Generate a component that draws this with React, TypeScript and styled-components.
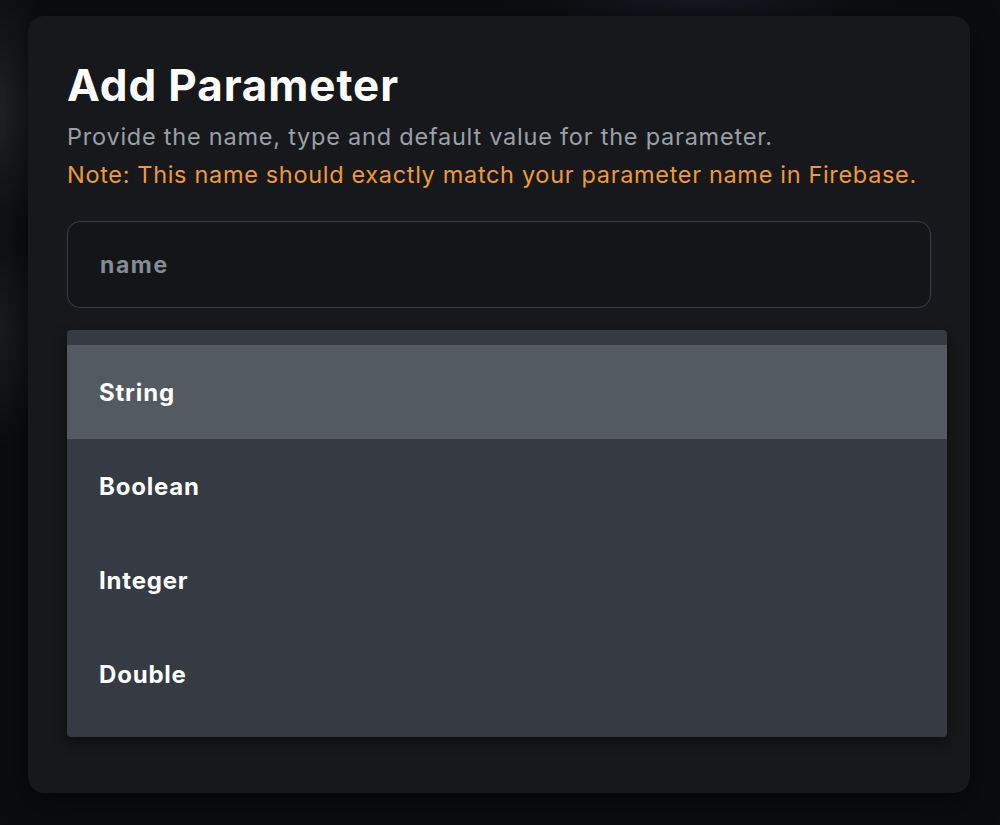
import React from "react";
import styled, { createGlobalStyle } from "styled-components";

const Global = createGlobalStyle`
  html, body { margin: 0; padding: 0; }
  body {
    background: #0b0c0e;
    font-family: "Inter", "Open Sans", sans-serif;
    width: 1000px;
    height: 825px;
    overflow: hidden;
  }
`;

const Page = styled.div`
  width: 1000px;
  height: 825px;
  box-sizing: border-box;
  padding: 16px 30px 0 28px;
  background:
    radial-gradient(ellipse 60px 140px at 0px 110px, rgba(70,72,78,0.35), transparent),
    radial-gradient(ellipse 50px 120px at 0px 330px, rgba(60,62,68,0.3), transparent),
    radial-gradient(ellipse 200px 30px at 700px 0px, rgba(40,40,60,0.4), transparent),
    #0b0c0e;
`;

const Card = styled.div`
  width: 942px;
  height: 777px;
  box-sizing: border-box;
  background: #16181b;
  border-radius: 16px;
  padding: 41px 39px 0 39px;
  display: flex;
  flex-direction: column;
  box-shadow: 0 10px 30px rgba(0,0,0,0.5);
`;

const Title = styled.h1`
  margin: 0;
  font-size: 44px;
  line-height: 56px;
  font-weight: 700;
  color: #ffffff;
  letter-spacing: 0.9px;
`;

const Text = styled.p<{ $tone: "muted" | "warn" }>`
  margin: 0;
  font-size: 23.5px;
  line-height: 38px;
  font-weight: 400;
  color: ${(p) => (p.$tone === "warn" ? "#ee9a3c" : "#9aa0a8")};
  letter-spacing: ${(p) => (p.$tone === "warn" ? "0.67px" : "0.77px")};
`;

const Intro = styled.div`
  margin-top: 5px;
  display: flex;
  flex-direction: column;
`;

const Input = styled.div`
  margin-top: 27px;
  height: 87px;
  box-sizing: border-box;
  border: 1.5px solid #3a3e45;
  border-radius: 13px;
  background: #131518;
  display: flex;
  align-items: center;
  padding-left: 32px;
  font-size: 23px;
  font-weight: 700;
  color: #858c95;
  letter-spacing: 1.6px;
`;

const Menu = styled.div`
  margin-top: 22px;
  width: 880px;
  background: #363a43;
  border-radius: 4px;
  padding: 15px 0 16px;
  display: flex;
  flex-direction: column;
  box-shadow: 0 6px 14px rgba(0,0,0,0.45);
`;

const Option = styled.div<{ $active?: boolean }>`
  height: 94px;
  display: flex;
  align-items: center;
  padding-left: 32px;
  font-size: 24px;
  font-weight: 700;
  color: #ffffff;
  letter-spacing: 0.8px;
  background: ${(p) => (p.$active ? "#545a62" : "transparent")};
`;

const options = ["String", "Boolean", "Integer", "Double"];

export default function App() {
  return (
    <>
      <Global />
      <Page>
        <Card>
          <Title>Add Parameter</Title>
          <Intro>
            <Text $tone="muted">Provide the name, type and default value for the parameter.</Text>
            <Text $tone="warn">Note: This name should exactly match your parameter name in Firebase.</Text>
          </Intro>
          <Input>name</Input>
          <Menu>
            {options.map((o, i) => (
              <Option key={o} $active={i === 0}>
                {o}
              </Option>
            ))}
          </Menu>
        </Card>
      </Page>
    </>
  );
}
